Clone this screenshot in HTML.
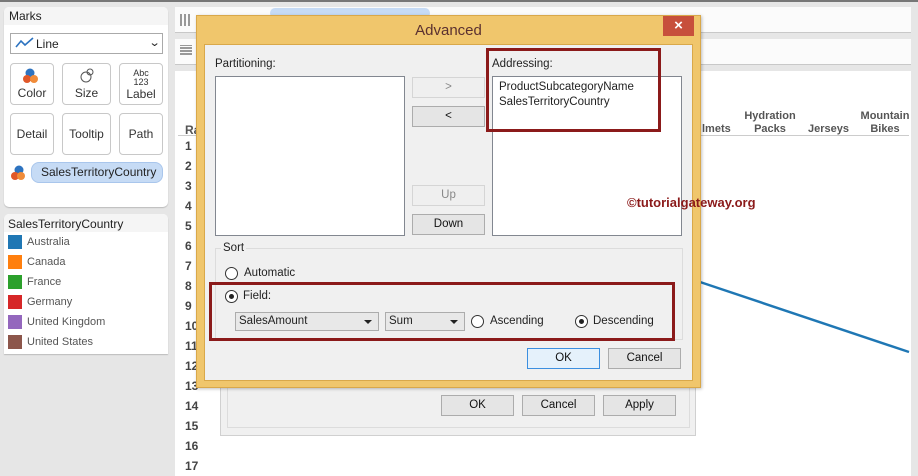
<!DOCTYPE html>
<html><head><meta charset="utf-8"><style>
*{margin:0;padding:0;box-sizing:border-box}
body{width:918px;height:476px;background:#e6e6e6;font-family:"Liberation Sans",sans-serif;font-size:12px;color:#222;position:relative;overflow:hidden}
.a{position:absolute}
.d{font-size:11.5px}
.btn{position:absolute;background:#e5e5e5;border:1px solid #acacac;text-align:center;font-size:11.5px;line-height:18px;color:#111}
.mb{position:absolute;background:#fff;border:1px solid #c8c8c8;border-radius:4px;text-align:center;font-size:12px;color:#333}
.num{position:absolute;left:185px;font-size:12px;font-weight:bold;color:#444}
.sw{position:absolute;left:8px;width:14px;height:14px}
.lg{position:absolute;left:27px;font-size:11px;color:#555}
.radio{position:absolute;width:13px;height:13px;border:1px solid #333;border-radius:50%;background:#fff}
.radio.on::after{content:"";position:absolute;left:3px;top:3px;width:5px;height:5px;border-radius:50%;background:#222}
.combo{position:absolute;background:#e8e8e8;border:1px solid #acacac;font-size:11.5px;line-height:17px;padding-left:3px}
.combo::after{content:"";position:absolute;right:6px;top:7px;border-left:4px solid transparent;border-right:4px solid transparent;border-top:4px solid #222}
</style></head><body>
<div class="a" style="left:0;top:0;width:918px;height:2px;background:#777"></div>
<!-- Marks panel -->
<div class="a" style="left:4px;top:7px;width:164px;height:200px;background:#fff;border-radius:5px;box-shadow:0 1px 1px #bbb"></div>
<div class="a" style="left:4px;top:7px;width:164px;height:18px;background:#f5f5f5;border-radius:5px 5px 0 0"></div>
<div class="a" style="left:9px;top:9px;font-size:12px">Marks</div>
<div class="a" style="left:10px;top:33px;width:153px;height:21px;border:1px solid #aaa;background:#fff"></div>
<svg class="a" style="left:15px;top:37px" width="20" height="12"><polyline points="1,10 6,4 10,8 18,1" fill="none" stroke="#2d73c0" stroke-width="1.6"/></svg>
<div class="a" style="left:36px;top:37px;font-size:12px">Line</div>
<div class="a" style="left:150px;top:36px;font-size:11px;transform:scaleX(1.3)">&#8964;</div>
<div class="mb" style="left:10px;top:63px;width:44px;height:42px"><svg width="20" height="18" style="margin-top:3px"><circle cx="8" cy="6" r="4.5" fill="#2d73c0"/><circle cx="5" cy="12" r="4" fill="#e0582a"/><circle cx="12" cy="12" r="4" fill="#f08c3a"/></svg><div style="margin-top:-2px">Color</div></div>
<div class="mb" style="left:62px;top:63px;width:49px;height:42px"><svg width="20" height="18" style="margin-top:3px"><circle cx="9" cy="10" r="5" fill="none" stroke="#555"/><circle cx="13" cy="5" r="3" fill="none" stroke="#555"/></svg><div style="margin-top:-2px">Size</div></div>
<div class="mb" style="left:119px;top:63px;width:44px;height:42px"><div style="font-size:9px;line-height:9px;margin-top:5px">Abc<br>123</div><div>Label</div></div>
<div class="mb" style="left:10px;top:113px;width:44px;height:42px;line-height:40px">Detail</div>
<div class="mb" style="left:62px;top:113px;width:49px;height:42px;line-height:40px">Tooltip</div>
<div class="mb" style="left:119px;top:113px;width:44px;height:42px;line-height:40px">Path</div>
<svg class="a" style="left:10px;top:164px" width="18" height="18"><circle cx="9" cy="6" r="4.5" fill="#2d73c0"/><circle cx="5" cy="12" r="4" fill="#e0582a"/><circle cx="11" cy="12" r="4" fill="#f08c3a"/></svg>
<div class="a" style="left:31px;top:162px;width:132px;height:21px;background:#c6dbf5;border:1px solid #a9c6ec;border-radius:8px;font-size:12px;line-height:19px;padding-left:9px">SalesTerritoryCountry</div>
<!-- legend -->
<div class="a" style="left:4px;top:214px;width:164px;height:140px;background:#fff;border-radius:5px 5px 0 0;box-shadow:0 1px 1px #bbb"></div>
<div class="a" style="left:4px;top:214px;width:164px;height:18px;background:#f5f5f5;border-radius:5px 5px 0 0"></div>
<div class="a" style="left:8px;top:217px;font-size:12px">SalesTerritoryCountry</div>
<div class="sw" style="top:235px;background:#1f77b4"></div><div class="lg" style="top:236px">Australia</div>
<div class="sw" style="top:255px;background:#ff7f0e"></div><div class="lg" style="top:256px">Canada</div>
<div class="sw" style="top:275px;background:#2ca02c"></div><div class="lg" style="top:276px">France</div>
<div class="sw" style="top:295px;background:#d62728"></div><div class="lg" style="top:296px">Germany</div>
<div class="sw" style="top:315px;background:#9467bd"></div><div class="lg" style="top:316px">United Kingdom</div>
<div class="sw" style="top:335px;background:#8c564b"></div><div class="lg" style="top:336px">United States</div>
<!-- shelves -->
<div class="a" style="left:175px;top:7px;width:736px;height:26px;background:#fbfbfb;border-bottom:1px solid #c8c8c8"></div>
<div class="a" style="left:175px;top:39px;width:736px;height:26px;background:#fbfbfb;border-bottom:1px solid #c8c8c8"></div>
<div class="a" style="left:270px;top:8px;width:160px;height:10px;background:#c6dbf5;border-radius:6px"></div>
<div class="a" style="left:180px;top:14px;width:10px;height:12px;background:repeating-linear-gradient(90deg,#999 0 2px,transparent 2px 4px)"></div>
<div class="a" style="left:180px;top:45px;width:12px;height:10px;background:repeating-linear-gradient(0deg,#999 0 2px,transparent 2px 3px)"></div>
<!-- view -->
<div class="a" style="left:175px;top:71px;width:736px;height:405px;background:#fff"></div>
<div class="a" style="left:178px;top:135px;width:731px;height:1px;background:#ccc"></div>
<div class="a" style="left:185px;top:123px;font-weight:bold;color:#555">Ra</div>
<div class="a" style="left:702px;top:123px;font-weight:bold;color:#555;font-size:11px">lmets</div>
<div class="a" style="left:740px;top:110px;width:60px;text-align:center;font-weight:bold;color:#555;font-size:11px;line-height:13px">Hydration<br>Packs</div>
<div class="a" style="left:808px;top:123px;font-weight:bold;color:#555;font-size:11px">Jerseys</div>
<div class="a" style="left:858px;top:110px;width:54px;text-align:center;font-weight:bold;color:#555;font-size:11px;line-height:13px">Mountain<br>Bikes</div>
<div class="num" style="top:139px">1</div><div class="num" style="top:159px">2</div><div class="num" style="top:179px">3</div><div class="num" style="top:199px">4</div><div class="num" style="top:219px">5</div><div class="num" style="top:239px">6</div><div class="num" style="top:259px">7</div><div class="num" style="top:279px">8</div><div class="num" style="top:299px">9</div><div class="num" style="top:319px">10</div><div class="num" style="top:339px">11</div><div class="num" style="top:359px">12</div><div class="num" style="top:379px">13</div><div class="num" style="top:399px">14</div><div class="num" style="top:419px">15</div><div class="num" style="top:439px">16</div><div class="num" style="top:459px">17</div>
<svg class="a" style="left:0;top:0" width="918" height="476"><line x1="700" y1="282" x2="909" y2="352" stroke="#1f77b4" stroke-width="2.5"/></svg>
<!-- background dialog -->
<div class="a" style="left:220px;top:380px;width:476px;height:56px;background:#f0f0f0;border:1px solid #d0d0d0"></div>
<div class="a" style="left:227px;top:380px;width:463px;height:48px;border:1px solid #dcdcdc;border-top:none"></div>
<div class="btn" style="left:441px;top:395px;width:73px;height:21px">OK</div>
<div class="btn" style="left:522px;top:395px;width:73px;height:21px">Cancel</div>
<div class="btn" style="left:603px;top:395px;width:73px;height:21px">Apply</div>
<!-- Advanced dialog -->
<div class="a" style="left:196px;top:15px;width:505px;height:373px;background:#f0c66c;border:1px solid #d9a84a;box-shadow:1px 1px 3px rgba(0,0,0,.25)"></div>
<div class="a" style="left:196px;top:22px;width:505px;text-align:center;font-size:15px;color:#5a3030">Advanced</div>
<div class="a" style="left:663px;top:16px;width:31px;height:20px;background:#c7503c;color:#fff;text-align:center;font-size:15px;line-height:19px;font-weight:bold">×</div>
<div class="a" style="left:204px;top:44px;width:489px;height:337px;background:#f0f0f0;border:1px solid #d9a84a"></div>
<div class="a d" style="left:215px;top:58px">Partitioning:</div>
<div class="a" style="left:215px;top:76px;width:190px;height:160px;background:#fff;border:1px solid #828790"></div>
<div class="btn" style="left:412px;top:77px;width:73px;height:21px;color:#888;background:#efefef;border-color:#d5d5d5">&gt;</div>
<div class="btn" style="left:412px;top:106px;width:73px;height:21px">&lt;</div>
<div class="btn" style="left:412px;top:185px;width:73px;height:21px;color:#888;background:#efefef;border-color:#d5d5d5">Up</div>
<div class="btn" style="left:412px;top:214px;width:73px;height:21px">Down</div>
<div class="a d" style="left:492px;top:58px">Addressing:</div>
<div class="a" style="left:492px;top:76px;width:190px;height:160px;background:#fff;border:1px solid #828790"></div>
<div class="a d" style="left:499px;top:80px;line-height:15px">ProductSubcategoryName<br>SalesTerritoryCountry</div>
<div class="a" style="left:486px;top:48px;width:175px;height:84px;border:3px solid #8b1a1a"></div>
<div class="a" style="left:627px;top:195px;font-size:13px;font-weight:bold;color:#8b1a1a">©tutorialgateway.org</div>
<div class="a" style="left:215px;top:248px;width:468px;height:92px;border:1px solid #dcdcdc"></div>
<div class="a d" style="left:221px;top:242px;background:#f0f0f0;padding:0 2px">Sort</div>
<div class="radio" style="left:225px;top:267px"></div><div class="a d" style="left:244px;top:267px">Automatic</div>
<div class="a" style="left:209px;top:282px;width:466px;height:59px;border:3px solid #8b1a1a"></div>
<div class="radio on" style="left:225px;top:290px"></div><div class="a d" style="left:243px;top:290px">Field:</div>
<div class="combo" style="left:235px;top:312px;width:144px;height:19px">SalesAmount</div>
<div class="combo" style="left:385px;top:312px;width:80px;height:19px">Sum</div>
<div class="radio" style="left:471px;top:315px"></div><div class="a d" style="left:490px;top:315px">Ascending</div>
<div class="radio on" style="left:575px;top:315px"></div><div class="a d" style="left:593px;top:315px">Descending</div>
<div class="btn" style="left:527px;top:348px;width:73px;height:21px;background:#e5f1fb;border-color:#3c8fe0">OK</div>
<div class="btn" style="left:608px;top:348px;width:73px;height:21px">Cancel</div>
</body></html>
